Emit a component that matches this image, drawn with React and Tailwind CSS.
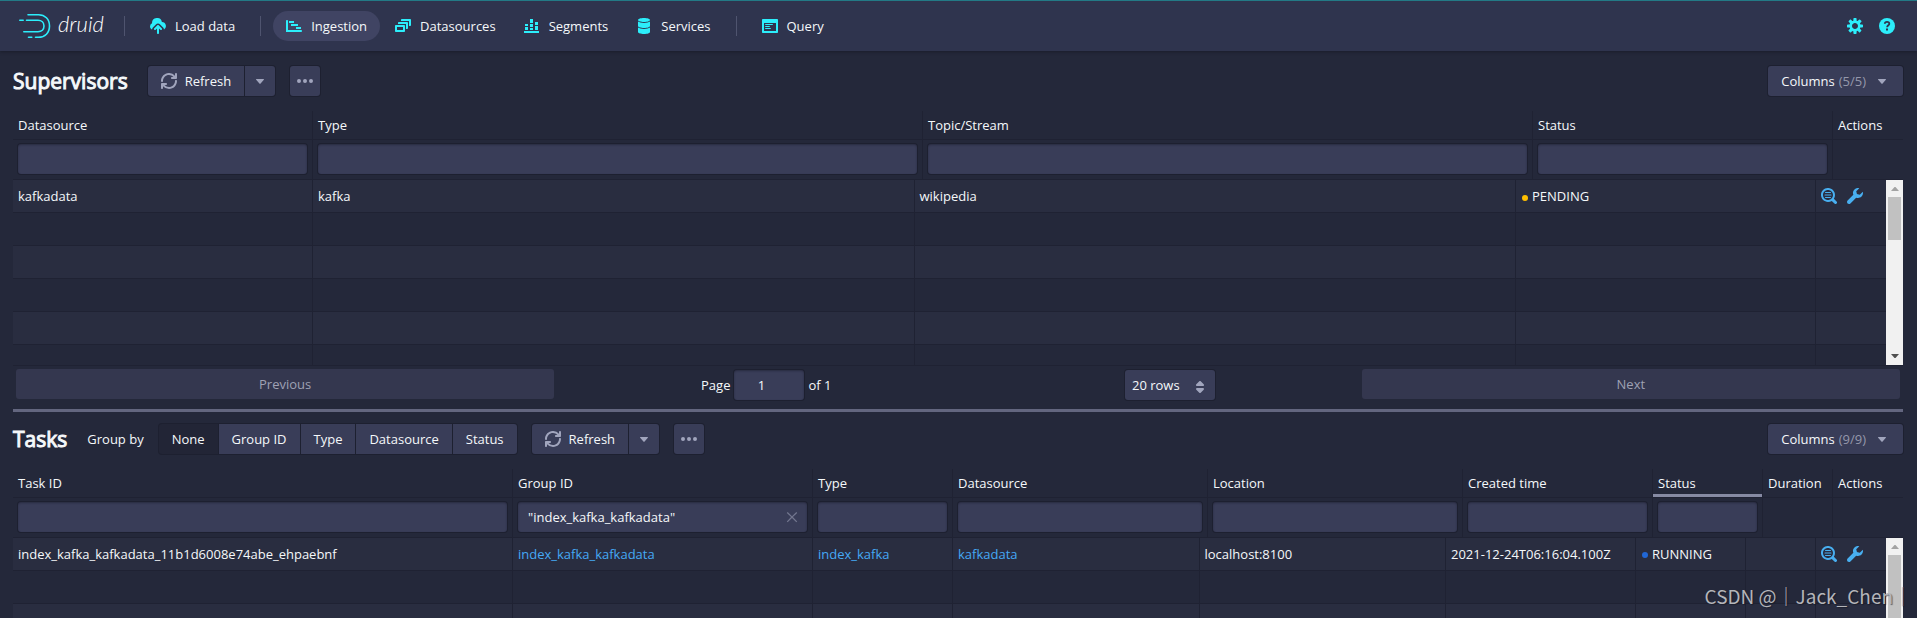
import React, { useState } from 'react';
import clsx from 'clsx';

const ICONS = {
  cloudUpload:
    'M8.71 7.29C8.53 7.11 8.28 7 8 7s-.53.11-.71.29l-3 3a1.003 1.003 0 001.42 1.42L7 10.41V15c0 .55.45 1 1 1s1-.45 1-1v-4.59l1.29 1.29c.18.19.43.3.71.3a1.003 1.003 0 00.71-1.71l-3-3zM12 4c-.03 0-.07 0-.1.01A5 5 0 002 5c0 .11.01.22.02.33A3.51 3.51 0 000 8.5c0 1.3.8 2.4 2 3 .1-.7.4-1.4.9-1.9l3-3C6.5 5.9 7.2 5.5 8 5.5s1.5.4 2.1 1.1l3 3c.5.5.8 1.1.9 1.8A4 4 0 0012 4z',
  gantt:
    'M1 2c.55 0 1 .45 1 1v9h13c.55 0 1 .45 1 1s-.45 1-1 1H0V3c0-.55.45-1 1-1zM3 3h5v2H3zM5 6h7v2H5zM10 9h5v2h-5z',
  multiSelect:
    'M12 3.98H4c-.55 0-1 .45-1 1v1h8v5h1c.55 0 1-.45 1-1v-5c0-.55-.45-1-1-1zm3-3H7c-.55 0-1 .45-1 1v1h8v5h1c.55 0 1-.45 1-1v-5c0-.55-.45-1-1-1zm-6 6H1c-.55 0-1 .45-1 1v5c0 .55.45 1 1 1h8c.55 0 1-.45 1-1v-5c0-.55-.45-1-1-1zm-1 5H2v-3h6v3z',
  stackedChart:
    'M0 13h15v2H0zM1 9h3v3H1zM1 6h3v2H1zM6 10h3v2H6zM6 6h3v3H6zM6 1h3v4H6zM11 8h3v4h-3zM11 4h3v3h-3z',
  database:
    'M8 4c3.31 0 6-.9 6-2s-2.69-2-6-2C4.68 0 2 .9 2 2s2.68 2 6 2zm-6-.48V8c0 1.1 2.69 2 6 2s6-.9 6-2V3.52C12.78 4.4 10.56 5 8 5s-4.78-.6-6-1.48zm0 6V14c0 1.1 2.69 2 6 2s6-.9 6-2V9.52C12.78 10.4 10.56 11 8 11s-4.78-.6-6-1.48z',
  application:
    'M3.5 7h7c.28 0 .5-.22.5-.5s-.22-.5-.5-.5h-7c-.28 0-.5.22-.5.5s.22.5.5.5zM15 1H1c-.55 0-1 .45-1 1v12c0 .55.45 1 1 1h14c.55 0 1-.45 1-1V2c0-.55-.45-1-1-1zm-1 12H2V5h12v8zM3.5 9h4c.28 0 .5-.22.5-.5S7.78 8 7.5 8h-4c-.28 0-.5.22-.5.5s.22.5.5.5zm0 2h5c.28 0 .5-.22.5-.5s-.22-.5-.5-.5h-5c-.28 0-.5.22-.5.5s.22.5.5.5z',
  cog: 'M15.19 6.39h-1.85c-.11-.37-.27-.71-.45-1.04l1.36-1.36c.31-.31.31-.82 0-1.13l-1.13-1.13a.803.803 0 00-1.13 0l-1.36 1.36c-.33-.17-.67-.33-1.04-.44V.79c0-.44-.36-.8-.8-.8h-1.6c-.44 0-.8.36-.8.8v1.86c-.39.12-.75.28-1.1.47l-1.3-1.3c-.3-.3-.79-.3-1.09 0L1.82 2.91c-.3.3-.3.79 0 1.09l1.3 1.3c-.2.34-.36.7-.48 1.09H.79c-.44 0-.8.36-.8.8v1.6c0 .44.36.8.8.8h1.85c.11.37.27.71.45 1.04l-1.36 1.36c-.31.31-.31.82 0 1.13l1.13 1.13c.31.31.82.31 1.13 0l1.36-1.36c.33.18.67.33 1.04.44v1.86c0 .44.36.8.8.8h1.6c.44 0 .8-.36.8-.8v-1.86c.39-.12.75-.28 1.1-.47l1.3 1.3c.3.3.79.3 1.09 0l1.09-1.09c.3-.3.3-.79 0-1.09l-1.3-1.3c.19-.35.36-.71.48-1.1h1.85c.44 0 .8-.36.8-.8v-1.6a.816.816 0 00-.81-.79zM7.99 10.99c-1.66 0-3-1.34-3-3s1.34-3 3-3 3 1.34 3 3-1.34 3-3 3z',
  refresh:
    'M14.99 6.99c-.55 0-1 .45-1 1 0 3.31-2.69 6-6 6-1.77 0-3.36-.78-4.46-2H5c.55 0 1-.45 1-1s-.45-1-1-1H1c-.55 0-1 .45-1 1v4c0 .55.45 1 1 1s1-.45 1-1v-1.74a7.95 7.95 0 006 2.74c4.42 0 8-3.58 8-8 0-.55-.46-1-1.01-1zm0-7c-.55 0-1 .45-1 1v1.74A7.95 7.95 0 007.99-.01c-4.42 0-8 3.58-8 8 0 .55.45 1 1 1s1-.45 1-1c0-3.31 2.69-6 6-6 1.77 0 3.36.78 4.46 2h-1.46c-.55 0-1 .45-1 1s.45 1 1 1h4c.55 0 1-.45 1-1v-4c0-.55-.45-1-1-1z',
  caretDown:
    'M12 6.5c0-.28-.22-.5-.5-.5h-7a.495.495 0 00-.37.83l3.5 4c.09.1.22.17.37.17s.28-.07.37-.17l3.5-4c.08-.09.13-.2.13-.33z',
  more: 'M2 6a2 2 0 100 4 2 2 0 000-4zM8 6a2 2 0 100 4 2 2 0 000-4zM14 6a2 2 0 100 4 2 2 0 000-4z',
  doubleCaret:
    'M5 7h6a1.003 1.003 0 00.71-1.71l-3-3C8.53 2.11 8.28 2 8 2s-.53.11-.71.29l-3 3A1.003 1.003 0 005 7zm6 2H5a1.003 1.003 0 00-.71 1.71l3 3c.18.18.43.29.71.29s.53-.11.71-.29l3-3A1.003 1.003 0 0011 9z',
  searchTemplate:
    'M15.55 13.43l-2.67-2.68a6.94 6.94 0 001.11-3.76c0-3.87-3.13-7-7-7s-7 3.13-7 7 3.13 7 7 7c1.39 0 2.68-.42 3.76-1.11l2.68 2.67a1.498 1.498 0 102.12-2.12zm-8.56-1.44c-2.76 0-5-2.24-5-5s2.24-5 5-5 5 2.24 5 5-2.24 5-5 5zM4.5 4h5a.5.5 0 010 1h-5a.5.5 0 010-1zM4 6.5h6a.5.5 0 010 1H4a.5.5 0 010-1zM4.5 9h5a.5.5 0 010 1h-5a.5.5 0 010-1z',
  wrench:
    'M15.83 3.7l-3.06 3.05-2.84-.7-.7-2.83L12.29.17a5.004 5.004 0 00-4.83 1.29 4.967 4.967 0 00-1.12 5.36L.58 12.58c-.36.36-.58.86-.58 1.41 0 1.1.9 2 2 2 .55 0 1.05-.22 1.41-.59l5.77-5.77c1.79.69 3.91.35 5.35-1.12 1.32-1.3 1.74-3.15 1.3-4.81z',
  cross: 'M3.7 3l4.3 4.3L12.3 3l.9.9L8.9 8.1l4.3 4.3-.9.9L8 9l-4.3 4.3-.9-.9 4.3-4.3L2.8 3.9z',
};

const Icon = ({ name, className }) => (
  <svg viewBox="0 0 16 16" className={clsx('size-4 shrink-0 fill-current', className)} aria-hidden="true">
    <path d={ICONS[name]} fillRule="evenodd" />
  </svg>
);

const HelpIcon = () => (
  <svg viewBox="0 0 16 16" className="size-4" aria-hidden="true">
    <circle cx="8" cy="8" r="8" fill="currentColor" />
    <path
      d="M5.8 5.8C5.9 4.4 6.9 3.8 8 3.8c1.3 0 2.3.7 2.3 1.9C10.3 7.2 8.2 7.4 8.1 9.3"
      fill="none"
      stroke="#2f344e"
      strokeWidth="1.8"
    />
    <rect x="7" y="10.5" width="2" height="2" fill="#2f344e" />
  </svg>
);

const Logo = () => (
  <a href="#home" className="flex items-center gap-[7px] text-white">
    <svg
      viewBox="0 0 33 26"
      className="h-[26px] w-[33px] fill-none stroke-[#2ceefb]"
      strokeWidth="1.6"
      strokeLinecap="round"
      aria-hidden="true"
    >
      <path d="M10 1.7h10.5c6.5 0 11 4.5 11 11.3s-4.5 11.3-11 11.3H17.5M13.8 24.3h-3.3" />
      <path d="M1.8 7.3h3.4M8.5 7.3H20c3.6 0 6 2.3 6 5.7s-2.4 5.7-6 5.7H5.8" />
    </svg>
    <span className="w-12 pb-1 font-[Lato,sans-serif] text-[22px] leading-6 font-light italic">druid</span>
  </a>
);

const NavDivider = () => <div className="mx-2.5 h-5 w-px bg-[#4f546f]" />;

const NavItem = ({ icon, label, active }) => (
  <a
    href={`#${label.toLowerCase().replace(' ', '-')}`}
    className={clsx(
      'flex h-[30px] items-center gap-[9px] rounded-full px-[13px] hover:bg-[#3a3f5c]',
      active && 'bg-[#404463]'
    )}
  >
    <Icon name={icon} className="text-[#2ceefb]" />
    {label}
  </a>
);

const HeaderBar = () => (
  <header className="z-10 flex h-[51px] shrink-0 items-center justify-between border-t border-[#237a86] bg-[#2f344e] pr-[22px] pl-[18px] shadow-[0_1px_3px_rgba(16,18,30,0.5)]">
    <nav className="flex items-center gap-0.5">
      <div className="pr-1.5">
        <Logo />
      </div>
      <NavDivider />
      <NavItem icon="cloudUpload" label="Load data" />
      <NavDivider />
      <NavItem icon="gantt" label="Ingestion" active />
      <NavItem icon="multiSelect" label="Datasources" />
      <NavItem icon="stackedChart" label="Segments" />
      <NavItem icon="database" label="Services" />
      <NavDivider />
      <NavItem icon="application" label="Query" />
    </nav>
    <div className="flex items-center gap-4 text-[#2ceefb]">
      <button type="button" aria-label="Settings">
        <Icon name="cog" />
      </button>
      <button type="button" aria-label="Help">
        <HelpIcon />
      </button>
    </div>
  </header>
);

const Button = ({ className, children, ...props }) => (
  <button
    type="button"
    className={clsx(
      'flex h-[30px] items-center justify-center bg-[#393d58] whitespace-nowrap shadow-[0_0_0_1px_#1d2030] hover:bg-[#414663]',
      className
    )}
    {...props}
  >
    {children}
  </button>
);

const RefreshButton = () => (
  <div className="flex gap-px">
    <Button className="gap-2 rounded-l-[3px] px-[13px]">
      <Icon name="refresh" className="text-[#a1a5bd]" />
      Refresh
    </Button>
    <Button className="w-[30px] rounded-r-[3px]" aria-label="Auto refresh">
      <Icon name="caretDown" className="text-[#a1a5bd]" />
    </Button>
  </div>
);

const MoreButton = () => (
  <Button className="w-[30px] rounded-[3px]" aria-label="More">
    <Icon name="more" className="text-[#a1a5bd]" />
  </Button>
);

const ColumnsButton = ({ count }) => (
  <Button className="ml-auto rounded-[3px] px-[13px]">
    Columns
    <span className="ml-1 text-[#9598ab]">{`(${count}/${count})`}</span>
    <Icon name="caretDown" className="ml-2 text-[#a1a5bd]" />
  </Button>
);

const Title = ({ children }) => (
  <h1 className="pr-[5px] text-[21px] leading-[30px] [-webkit-text-stroke:1px]">{children}</h1>
);

const FilterInput = ({ label, defaultValue = '' }) => {
  const [value, setValue] = useState(defaultValue);

  return (
    <div className="relative">
      <input
        type="text"
        aria-label={`Filter ${label}`}
        value={value}
        onChange={(e) => setValue(e.target.value)}
        className="block h-[30px] w-full rounded-[3px] bg-[#393d58] px-2.5 shadow-[0_0_0_1px_#1d2030,inset_0_1px_2px_rgba(16,18,30,0.4)] outline-none"
      />
      {value && (
        <button
          type="button"
          aria-label="Clear filter"
          onClick={() => setValue('')}
          className="absolute inset-y-0 right-[7px] text-[#73778f]"
        >
          <Icon name="cross" />
        </button>
      )}
    </div>
  );
};

// Scroll track drawn over the right edge of the table body
const ScrollTrack = ({ thumb }) => (
  <div className="absolute top-[69px] right-0 bottom-0 flex w-[17px] flex-col items-center justify-between overflow-hidden bg-[#f1f1f1]">
    <div className="flex flex-col items-center">
      <svg viewBox="0 0 17 17" className="size-[17px] fill-[#a3a3a3]">
        <path d="M5 11l3.5-4h1L13 11z" />
      </svg>
      <div className={clsx('w-[13px] bg-[#c1c1c1]', thumb)} />
    </div>
    <svg viewBox="0 0 17 17" className="size-[17px] fill-[#505050]">
      <path d="M5 6l3.5 4h1L13 6z" />
    </svg>
  </div>
);

const DataTable = ({ label, columns, rows, grid, thumb, className }) => (
  <div className={clsx('relative', className)}>
    <table aria-label={label} className="flex h-full flex-col">
      <thead className="block shrink-0">
        <tr className={clsx('grid border-b border-[#1f2233]', grid)}>
          {columns.map((c) => (
            <th
              key={c.label}
              className={clsx(
                'h-7 border-r border-[#1f2233] px-[5px] text-left leading-7 font-normal last:border-transparent',
                c.sorted && 'shadow-[inset_0_-3px_0_#868aa3]'
              )}
            >
              {c.label}
            </th>
          ))}
        </tr>
        <tr className={clsx('grid border-b border-[#1f2233]', grid)}>
          {columns.map((c) => (
            <td key={c.label} className="h-[39px] border-r border-[#1f2233] px-[5px] pt-1 last:border-transparent">
              {!c.noFilter && <FilterInput label={c.label} defaultValue={c.filter} />}
            </td>
          ))}
        </tr>
      </thead>
      <tbody className="block min-h-0 flex-1 overflow-hidden pr-[17px]">
        {Array.from({ length: 20 }, (_, i) => (
          <tr key={i} className={clsx('grid border-b border-[#1f2233] odd:bg-[#292d40]', grid)}>
            {columns.map((c) => (
              <td
                key={c.label}
                className="flex h-8 items-center border-r border-[#1f2233] px-[5px] whitespace-nowrap last:border-transparent"
              >
                {rows[i]?.[c.label]}
              </td>
            ))}
          </tr>
        ))}
      </tbody>
    </table>
    <ScrollTrack thumb={thumb} />
  </div>
);

const Status = ({ color, children }) => (
  <span className="flex items-center gap-1 pl-px">
    <span className={clsx('mt-[3px] size-1.5 rounded-full', color)} />
    {children}
  </span>
);

const RowActions = () => (
  <span className="flex gap-2.5 text-[#48aff0]">
    <button type="button" aria-label="Details">
      <Icon name="searchTemplate" />
    </button>
    <button type="button" aria-label="Actions">
      <Icon name="wrench" />
    </button>
  </span>
);

const Link = ({ children }) => (
  <a href="#filter" className="text-[#45a9f5] hover:underline">
    {children}
  </a>
);

const Pagination = () => (
  <div className="flex shrink-0 items-start border-t border-[#1f2233] px-[3px] pt-[3px] pb-[9px]">
    <button type="button" disabled className="h-[30px] flex-[2] rounded-[3px] bg-[#34374f] text-[#9ea1b4]">
      Previous
    </button>
    <div className="flex flex-[3] justify-around pt-px">
      <label className="mx-2.5 flex items-center gap-1">
        Page
        <input
          type="text"
          defaultValue="1"
          className="h-[30px] w-[70px] rounded-[3px] bg-[#393d58] pr-4 text-center shadow-[0_0_0_1px_#1d2030,inset_0_1px_2px_rgba(16,18,30,0.4)] outline-none"
        />
        of 1
      </label>
      <div className="relative mx-2.5">
        <select
          aria-label="Rows per page"
          className="h-[30px] w-[90px] appearance-none rounded-[3px] bg-[#393d58] pl-[7px] shadow-[0_0_0_1px_#1d2030] outline-none"
        >
          <option>20 rows</option>
          <option>50 rows</option>
        </select>
        <Icon name="doubleCaret" className="pointer-events-none absolute top-[9px] right-[7px] text-[#a1a5bd]" />
      </div>
    </div>
    <button type="button" disabled className="h-[30px] flex-[2] rounded-[3px] bg-[#34374f] text-[#9ea1b4]">
      Next
    </button>
  </div>
);

const supervisorColumns = [
  { label: 'Datasource' },
  { label: 'Type' },
  { label: 'Topic/Stream' },
  { label: 'Status' },
  { label: 'Actions', noFilter: true },
];

const supervisors = [
  {
    Datasource: 'kafkadata',
    Type: 'kafka',
    'Topic/Stream': 'wikipedia',
    Status: <Status color="bg-[#ffbf00]">PENDING</Status>,
    Actions: <RowActions />,
  },
];

const taskColumns = [
  { label: 'Task ID' },
  { label: 'Group ID', filter: '"index_kafka_kafkadata"' },
  { label: 'Type' },
  { label: 'Datasource' },
  { label: 'Location' },
  { label: 'Created time' },
  { label: 'Status', sorted: true },
  { label: 'Duration', noFilter: true },
  { label: 'Actions', noFilter: true },
];

const tasks = [
  {
    'Task ID': 'index_kafka_kafkadata_11b1d6008e74abe_ehpaebnf',
    'Group ID': <Link>index_kafka_kafkadata</Link>,
    Type: <Link>index_kafka</Link>,
    Datasource: <Link>kafkadata</Link>,
    Location: 'localhost:8100',
    'Created time': '2021-12-24T06:16:04.100Z',
    Status: <Status color="bg-[#2167d5]">RUNNING</Status>,
    Actions: <RowActions />,
  },
];

const GROUPINGS = ['None', 'Group ID', 'Type', 'Datasource', 'Status'];

const GroupBy = () => {
  const [selected, setSelected] = useState('None');

  return (
    <div className="flex gap-px">
      {GROUPINGS.map((g) => (
        <Button
          key={g}
          aria-pressed={g === selected}
          onClick={() => setSelected(g)}
          className={clsx(
            'px-[13px] first:rounded-l-[3px] last:rounded-r-[3px]',
            g === selected && 'bg-[#222536]!'
          )}
        >
          {g}
        </Button>
      ))}
    </div>
  );
};

const App = () => (
  <div className="relative flex h-screen flex-col overflow-hidden bg-[#24283a] font-['Open_Sans',sans-serif] text-[13px] leading-[18px] text-[#f5f8fa]">
    <HeaderBar />
    <main className="grid min-h-0 flex-1 grid-rows-[33fr_3px_19fr] pr-3.5 pl-[13px]">
      <section className="flex min-h-0 flex-col pt-[15px]">
        <div className="mb-[15px] flex items-center gap-[15px]">
          <Title>Supervisors</Title>
          <RefreshButton />
          <MoreButton />
          <ColumnsButton count={5} />
        </div>
        <DataTable
          label="Supervisors"
          columns={supervisorColumns}
          rows={supervisors}
          grid="grid-cols-[300px_1fr_1fr_300px_70px]"
          thumb="h-[43px]"
          className="min-h-0 flex-1"
        />
        <Pagination />
      </section>
      <div role="separator" className="bg-[#63667f]" />
      <section className="flex min-h-0 flex-col pt-3">
        <div className="mb-[15px] flex items-center gap-[15px]">
          <Title>Tasks</Title>
          <span>Group by</span>
          <GroupBy />
          <RefreshButton />
          <MoreButton />
          <ColumnsButton count={9} />
        </div>
        <DataTable
          label="Tasks"
          columns={taskColumns}
          rows={tasks}
          grid="grid-cols-[500px_300px_140px_1fr_1fr_190px_110px_70px_70px]"
          thumb="h-[86px]"
          className="h-80 flex-none"
        />
      </section>
    </main>
    <div className="pointer-events-none absolute right-[5px] bottom-2.5 font-['Noto_Sans_CJK_SC',sans-serif] text-[19px] leading-6 text-[#b4b5ba] [text-shadow:1px_1px_1px_rgba(20,22,34,0.6)]">
      CSDN @｜Jack_Chen｜
    </div>
  </div>
);

export default App;
